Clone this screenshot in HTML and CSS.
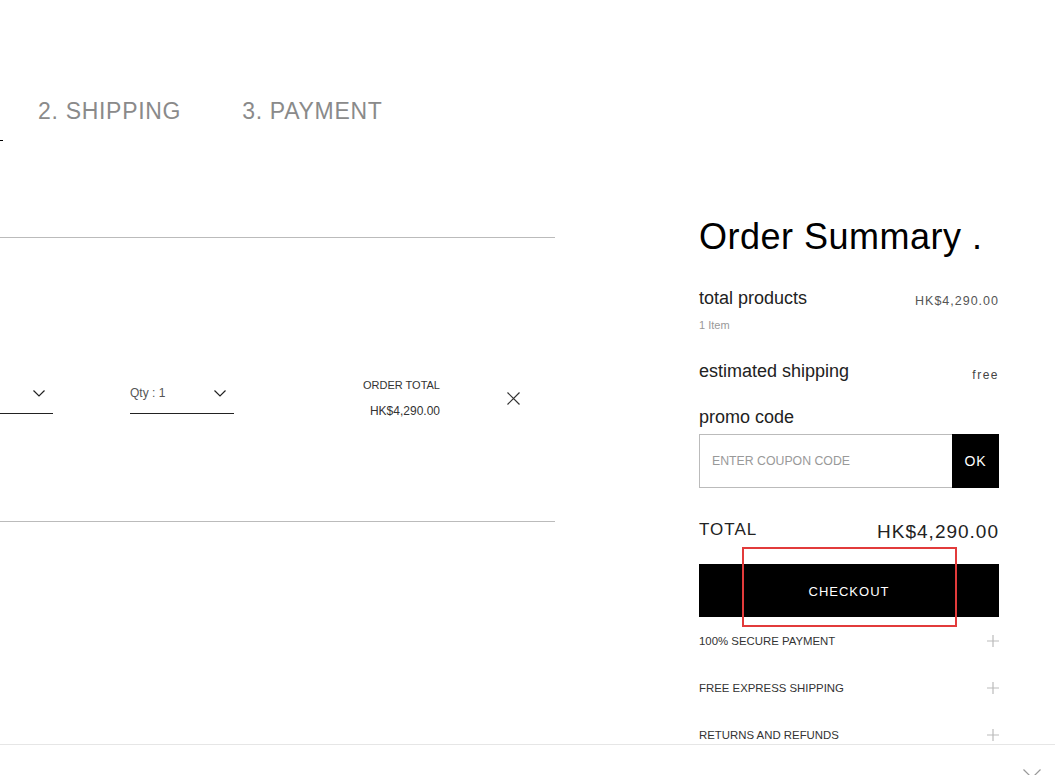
FILE: index.html
```html
<!DOCTYPE html>
<html lang="en">
<head>
  <meta charset="UTF-8">
  <meta name="viewport" content="width=device-width, initial-scale=1.0">
  <title>Checkout - Shopping Bag</title>
  <link rel="stylesheet" href="styles.css">
</head>
<body>
  <div class="page">
    <div class="bag">
      <ul class="steps">
        <li class="step active" aria-label="1. SHOPPING BAG"></li>
        <li class="step">2. SHIPPING</li>
        <li class="step">3. PAYMENT</li>
      </ul>

      <div class="cart">
        <div class="cart-item">
          <div class="select size" aria-label="Size">
            <svg width="12" height="7" viewBox="0 0 12 7"><path d="M0.5 0.5l5.5 5.5 5.5-5.5" fill="none" stroke="#222" stroke-width="1.2"/></svg>
          </div>
          <div class="select qty">
            <span>Qty : 1</span>
            <svg width="12" height="7" viewBox="0 0 12 7"><path d="M0.5 0.5l5.5 5.5 5.5-5.5" fill="none" stroke="#222" stroke-width="1.2"/></svg>
          </div>
          <div class="order-total">
            <div class="ot-label">ORDER TOTAL</div>
            <div>HK$4,290.00</div>
          </div>
          <button class="remove" aria-label="remove">
            <svg width="13" height="13" viewBox="0 0 13 13"><path d="M0.5 0.5l12 12M12.5 0.5l-12 12" stroke="#333" stroke-width="1.2"/></svg>
          </button>
        </div>
      </div>
    </div>

    <aside class="summary">
      <h1>Order Summary .</h1>

      <div class="row">
        <span class="label">total products</span>
        <span class="price">HK$4,290.00</span>
      </div>
      <div class="count">1 Item</div>

      <div class="row shipping">
        <span class="label">estimated shipping</span>
        <span class="free">free</span>
      </div>

      <div class="label promo-label">promo code</div>
      <div class="promo">
        <input type="text" placeholder="ENTER COUPON CODE">
        <button>OK</button>
      </div>

      <div class="row total">
        <span class="total-label">TOTAL</span>
        <span class="total-price">HK$4,290.00</span>
      </div>

      <div class="checkout-wrap">
        <button class="checkout">CHECKOUT</button>
        <div class="highlight"></div>
      </div>

      <ul class="info">
        <li>100% SECURE PAYMENT <svg width="12" height="12" viewBox="0 0 12 12"><path d="M6 0v12M0 6h12" stroke="#bbb" stroke-width="1.2"/></svg></li>
        <li>FREE EXPRESS SHIPPING <svg width="12" height="12" viewBox="0 0 12 12"><path d="M6 0v12M0 6h12" stroke="#bbb" stroke-width="1.2"/></svg></li>
        <li>RETURNS AND REFUNDS <svg width="12" height="12" viewBox="0 0 12 12"><path d="M6 0v12M0 6h12" stroke="#bbb" stroke-width="1.2"/></svg></li>
      </ul>
    </aside>
  </div>

  <div class="bottom-bar">
    <svg width="18" height="10" viewBox="0 0 18 10"><path d="M0.5 0.5l8.5 8.5 8.5-8.5" fill="none" stroke="#999" stroke-width="1.2"/></svg>
  </div>
</body>
</html>
```

FILE: styles.css
```css
* {
  box-sizing: border-box;
}
body {
  margin: 0;
  overflow: hidden;
  font-family: "Liberation Sans", Arial, sans-serif;
  color: #222;
  background: #fff;
}
ul {
  list-style: none;
  margin: 0;
  padding: 0;
}
button {
  font-family: inherit;
  border: none;
  cursor: pointer;
}
.page {
  display: flex;
  width: 1055px;
}

/* left : bag */
.bag {
  width: 555px;
  flex: none;
  padding-top: 97px;
}
.steps {
  display: flex;
  font-size: 23px;
  line-height: 28px;
  letter-spacing: 0.7px;
  color: #8a8a8a;
}
.step {
  padding-bottom: 15px;
  border-bottom: 1px solid transparent;
  margin-right: 61px;
  white-space: nowrap;
}
.step.active {
  width: 230px;
  margin-left: -227px;
  margin-right: 35px;
  color: #000;
  border-bottom-color: #000;
}
.cart {
  margin-top: 96px;
  border-top: 1px solid #bbb;
}
.cart-item {
  display: flex;
  align-items: center;
  height: 284px;
  padding-top: 36px;
  border-bottom: 1px solid #bbb;
}
.select {
  display: flex;
  align-items: center;
  justify-content: space-between;
  height: 33px;
  padding: 0 8px 8px 0;
  border-bottom: 1px solid #222;
  font-size: 12px;
  color: #555;
}
.select.size {
  width: 150px;
  margin-left: -97px;
  justify-content: flex-end;
}
.select.qty {
  width: 104px;
  margin-left: 77px;
}
.order-total {
  width: 120px;
  margin-left: 86px;
  text-align: right;
  font-size: 12px;
  line-height: 26px;
  color: #333;
}
.ot-label {
  font-size: 11px;
}
.remove {
  margin-left: 67px;
  padding: 0;
  background: none;
  display: flex;
  margin-top: 2px;
}

/* right : summary */
.summary {
  width: 300px;
  margin-left: 144px;
  padding-top: 215px;
}
.summary h1 {
  margin: 0;
  font-size: 36px;
  line-height: 44px;
  font-weight: normal;
  letter-spacing: 0.5px;
  color: #000;
}
.row {
  display: flex;
  justify-content: space-between;
  align-items: center;
  margin-top: 27px;
}
.label {
  font-size: 18px;
  line-height: 24px;
  color: #222;
}
.price {
  padding-top: 6px;
  font-size: 12.5px;
  letter-spacing: 1px;
  color: #555;
}
.count {
  margin-top: 7px;
  font-size: 11px;
  line-height: 16px;
  color: #999;
}
.row.shipping {
  margin-top: 26px;
}
.free {
  padding-top: 8px;
  font-size: 12px;
  letter-spacing: 1.5px;
  color: #444;
}
.promo-label {
  margin-top: 22px;
}
.promo {
  display: flex;
  height: 54px;
  margin-top: 5px;
}
.promo input {
  flex: 1;
  min-width: 0;
  border: 1px solid #bbb;
  border-right: none;
  padding: 0 12px;
  font-family: inherit;
  font-size: 12.3px;
  outline: none;
}
.promo input::placeholder {
  color: #999;
}
.promo button {
  width: 47px;
  background: #000;
  color: #fff;
  font-size: 14px;
  letter-spacing: 1px;
}
.row.total {
  margin-top: 29px;
}
.total-label {
  font-size: 17px;
  line-height: 24px;
  letter-spacing: 1px;
}
.total-price {
  padding-top: 4px;
  font-size: 19px;
  letter-spacing: 1px;
}
.checkout-wrap {
  position: relative;
  margin-top: 21px;
}
.checkout {
  display: block;
  width: 100%;
  height: 53px;
  padding-top: 2px;
  background: #000;
  color: #fff;
  font-size: 13px;
  letter-spacing: 1px;
}
.highlight {
  position: absolute;
  left: 43px;
  top: -17px;
  width: 215px;
  height: 80px;
  border: 2px solid #e23b3b;
  pointer-events: none;
}
.info li {
  display: flex;
  align-items: center;
  justify-content: space-between;
  height: 47px;
  font-size: 11.4px;
  color: #333;
}
.bottom-bar {
  position: fixed;
  left: 0;
  right: 0;
  bottom: 0;
  height: 31px;
  background: #fff;
  border-top: 1px solid #e6e6e6;
  display: flex;
  justify-content: flex-end;
  padding: 24px 14px 0 0;
}
```
